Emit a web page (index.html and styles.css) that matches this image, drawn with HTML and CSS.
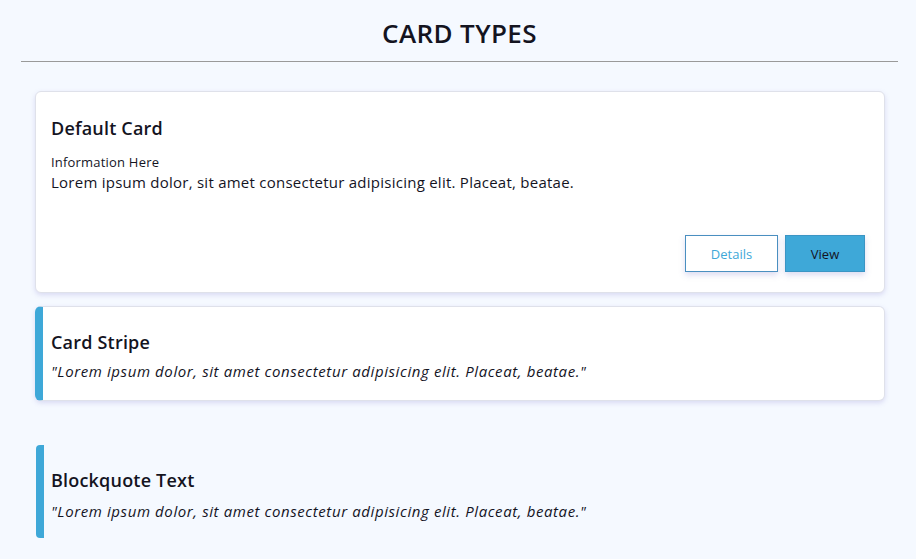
FILE: index.html
```html
<!DOCTYPE html>
<html>
<head>
<meta charset="utf-8">
<link rel="stylesheet" href="styles.css">
</head>
<body>
<header class="page-header">
  <h1 class="page-title">CARD TYPES</h1>
  <hr class="divider">
</header>
<main class="cards">
  <section class="card">
    <h3 class="card-title">Default Card</h3>
    <p class="card-label">Information Here</p>
    <p class="card-text">Lorem ipsum dolor, sit amet consectetur adipisicing elit. Placeat, beatae.</p>
    <div class="card-actions">
      <button class="btn btn-outline">Details</button>
      <button class="btn btn-solid">View</button>
    </div>
  </section>
  <section class="card card-stripe">
    <h3 class="card-title">Card Stripe</h3>
    <p class="quote quote-tight">"Lorem ipsum dolor, sit amet consectetur adipisicing elit. Placeat, beatae."</p>
  </section>
  <blockquote class="blockquote">
    <h3 class="card-title">Blockquote Text</h3>
    <p class="quote">"Lorem ipsum dolor, sit amet consectetur adipisicing elit. Placeat, beatae."</p>
  </blockquote>
</main>
</body>
</html>
```
FILE: styles.css
```css
* { box-sizing: border-box; }
body {
  margin: 0;
  background: #f5f9ff;
  font-family: "Open Sans", "DejaVu Sans", sans-serif;
  color: #14141f;
}
.page-header {
  padding: 16px 18px 0 21px;
}
.page-title {
  margin: 0;
  text-align: center;
  font-size: 26px;
  line-height: 34px;
  font-weight: 600;
  letter-spacing: 0.4px;
}
.divider {
  margin: 11px 0 0;
  border: 0;
  border-top: 1px solid #9a9a9a;
}
.cards {
  display: flex;
  flex-direction: column;
  padding: 29px 31px 0 35px;
}
.card {
  background: #fff;
  border: 1px solid #dfe1ea;
  border-radius: 6px;
  box-shadow: 0 2px 5px rgba(120, 110, 200, 0.22);
  padding: 23px 19px 20px 15px;
}
.card-title {
  margin: 0;
  font-size: 18px;
  line-height: 27px;
  font-weight: 600;
  letter-spacing: 0.2px;
}
.card-label {
  margin: 10px 0 0;
  font-size: 13px;
  line-height: 20px;
  letter-spacing: 0.2px;
}
.card-text {
  margin: 0;
  font-size: 15px;
  line-height: 21px;
  letter-spacing: 0.25px;
}
.card-actions {
  display: flex;
  justify-content: flex-end;
  gap: 7px;
  margin-top: 42px;
}
.btn {
  font-family: inherit;
  font-size: 13px;
  height: 37px;
  border-radius: 0;
  cursor: pointer;
  box-shadow: 0 3px 6px rgba(110, 110, 200, 0.25);
}
.btn-outline {
  width: 93px;
  background: #fff;
  color: #3ea8d8;
  border: 1px solid #4a8fc0;
}
.btn-solid {
  width: 80px;
  background: #3ea8d8;
  color: #14141f;
  border: 1px solid #3b95c4;
}
.card-stripe {
  margin-top: 13px;
  border-left: 8px solid #3ea8d8;
  padding: 22px 19px 18px 8px;
}
.quote {
  margin: 7px 0 0;
  font-size: 15px;
  line-height: 21px;
  font-style: italic;
  letter-spacing: 0.6px;
}
.quote-tight {
  margin-top: 5px;
}
.blockquote {
  margin: 44px 0 0 1px;
  border-left: 8px solid #3ea8d8;
  border-radius: 4px;
  padding: 22px 0 16px 7px;
}
```
